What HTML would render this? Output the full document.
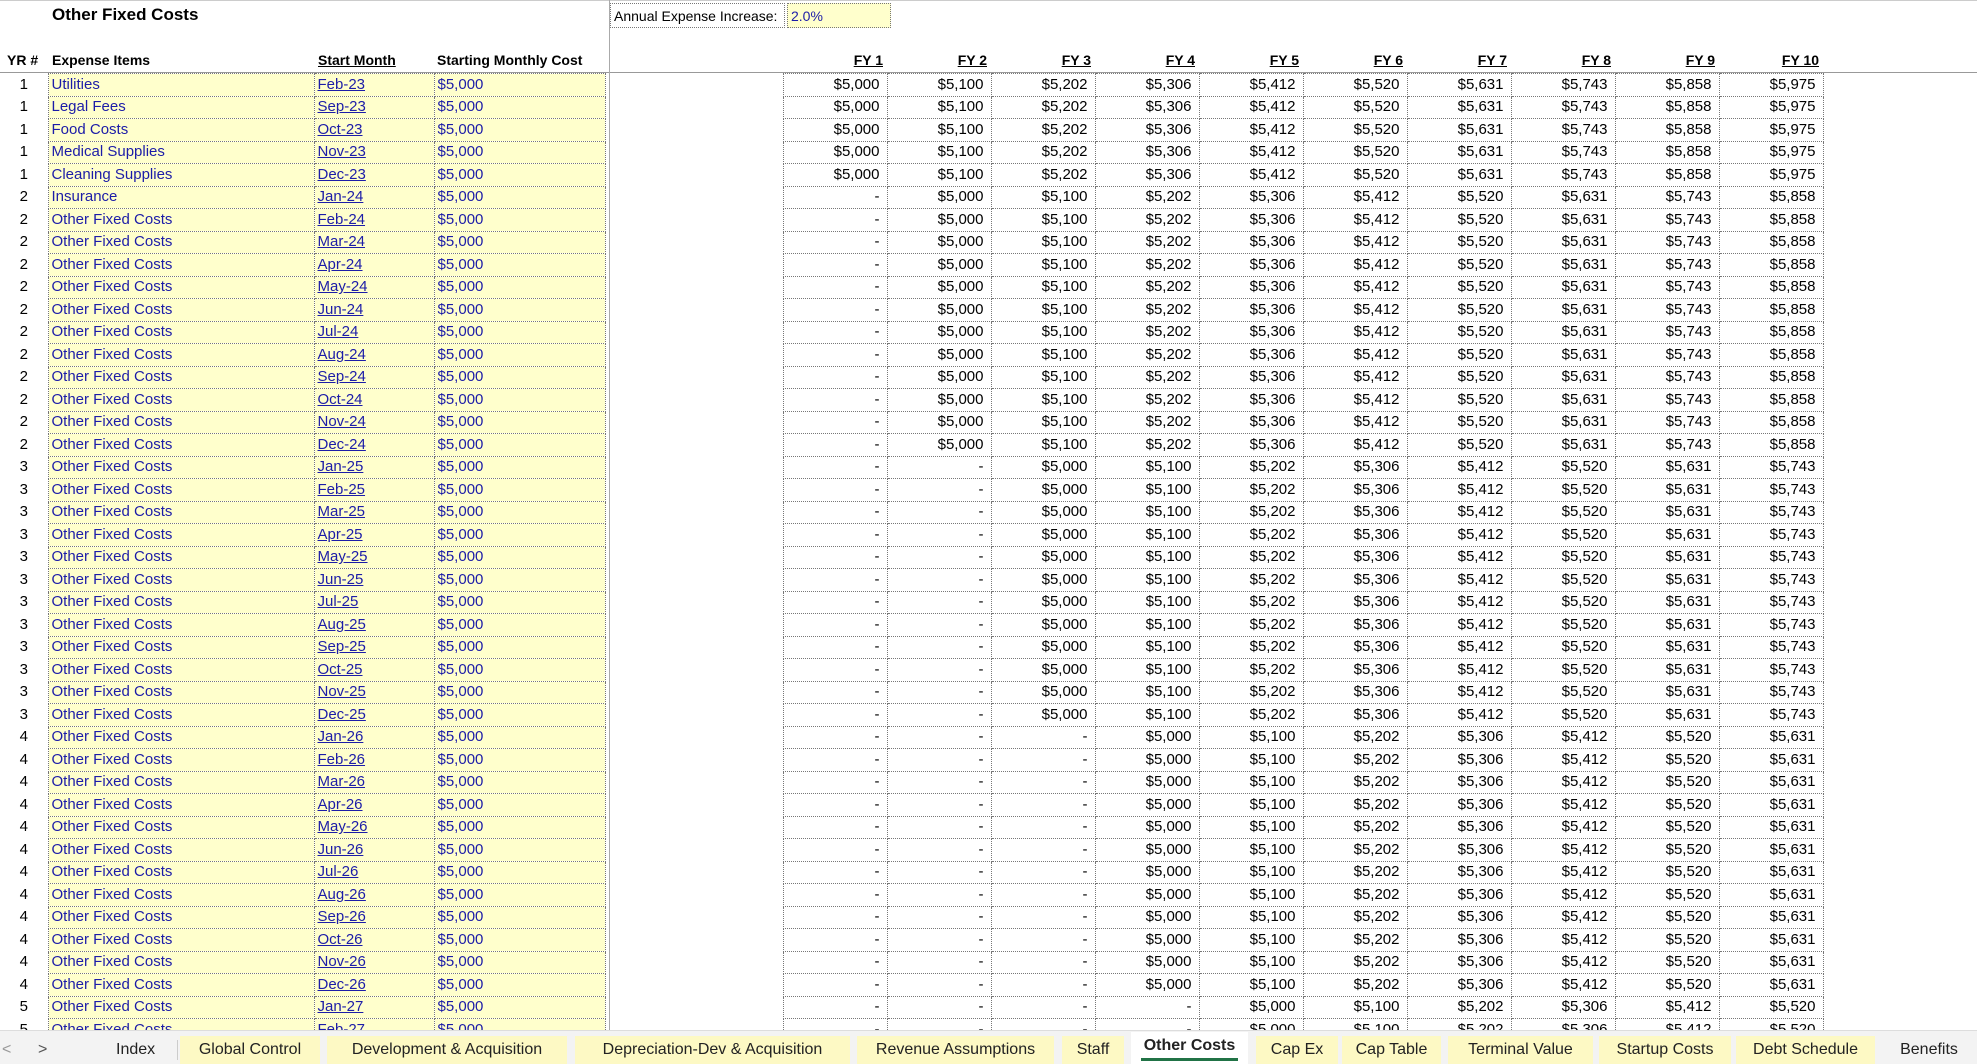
<!DOCTYPE html>
<html><head><meta charset="utf-8"><style>
html,body{margin:0;width:1977px;height:1064px;overflow:hidden}
body{background:#fff;font-family:"Liberation Sans",sans-serif;font-size:15px;color:#000;position:relative}
.abs{position:absolute;white-space:nowrap}
#wrap{position:absolute;left:0;top:73px;width:1977px;height:957px;overflow:hidden}
table{border-collapse:collapse;table-layout:fixed}
td{box-sizing:border-box;height:22.5px;padding:0;white-space:nowrap;overflow:hidden;line-height:20px}
.a{width:48px;text-align:center}
.b,.c,.d{background:#ffffcc;color:#1c1ca8;border:1px dotted #777;padding-left:3px}
.b{width:266px}.c{width:120px}.d{width:171px}
.c{text-decoration:underline}
.e{width:178px}
.n{width:104px;text-align:right;padding-right:7px;border:1px dotted #777}
.tab{position:absolute;top:1036px;height:28px;line-height:28px;text-align:center;background:#fdf9c4;font-size:16px;color:#222}
</style></head><body>
<div style="position:absolute;left:0;top:0;width:1977px;height:1px;background:#ccc"></div>
<div class="abs" style="left:52px;top:5px;font-weight:bold;font-size:17px">Other Fixed Costs</div>
<div class="abs" style="left:610px;top:3px;width:175px;height:25px;border:1px dotted #777;font-size:14px;line-height:25px;padding-left:3px;box-sizing:border-box">Annual Expense Increase:</div>
<div class="abs" style="left:787px;top:3px;width:104px;height:25px;background:#ffffcc;border:1px dotted #777;color:#1c1ca8;font-size:14px;line-height:25px;padding-left:3px;box-sizing:border-box">2.0%</div>
<div style="position:absolute;left:609px;top:0;width:1px;height:1030px;background:#aaa;z-index:2"></div>
<div class="abs" style="left:7px;top:52px;font-weight:bold;font-size:14px">YR #</div>
<div class="abs" style="left:52px;top:52px;font-weight:bold;font-size:14px">Expense Items</div>
<div class="abs" style="left:318px;top:52px;font-weight:bold;font-size:14px;text-decoration:underline">Start Month</div>
<div class="abs" style="left:437px;top:52px;font-weight:bold;font-size:14px">Starting Monthly Cost</div>
<div class="abs" style="left:787px;top:52px;width:1040px;font-weight:bold;font-size:14px;display:flex">
<span style="width:104px;text-align:right;padding-right:8px;box-sizing:border-box;text-decoration:underline">FY 1</span><span style="width:104px;text-align:right;padding-right:8px;box-sizing:border-box;text-decoration:underline">FY 2</span><span style="width:104px;text-align:right;padding-right:8px;box-sizing:border-box;text-decoration:underline">FY 3</span><span style="width:104px;text-align:right;padding-right:8px;box-sizing:border-box;text-decoration:underline">FY 4</span><span style="width:104px;text-align:right;padding-right:8px;box-sizing:border-box;text-decoration:underline">FY 5</span><span style="width:104px;text-align:right;padding-right:8px;box-sizing:border-box;text-decoration:underline">FY 6</span><span style="width:104px;text-align:right;padding-right:8px;box-sizing:border-box;text-decoration:underline">FY 7</span><span style="width:104px;text-align:right;padding-right:8px;box-sizing:border-box;text-decoration:underline">FY 8</span><span style="width:104px;text-align:right;padding-right:8px;box-sizing:border-box;text-decoration:underline">FY 9</span><span style="width:104px;text-align:right;padding-right:8px;box-sizing:border-box;text-decoration:underline">FY 10</span></div>
<div style="position:absolute;left:0;top:72px;width:1977px;height:1px;background:#999"></div>
<div id="wrap"><table>
<tr><td class=a>1</td><td class=b>Utilities</td><td class=c>Feb-23</td><td class=d>$5,000</td><td class=e></td><td class=n>$5,000</td><td class=n>$5,100</td><td class=n>$5,202</td><td class=n>$5,306</td><td class=n>$5,412</td><td class=n>$5,520</td><td class=n>$5,631</td><td class=n>$5,743</td><td class=n>$5,858</td><td class=n>$5,975</td></tr>
<tr><td class=a>1</td><td class=b>Legal Fees</td><td class=c>Sep-23</td><td class=d>$5,000</td><td class=e></td><td class=n>$5,000</td><td class=n>$5,100</td><td class=n>$5,202</td><td class=n>$5,306</td><td class=n>$5,412</td><td class=n>$5,520</td><td class=n>$5,631</td><td class=n>$5,743</td><td class=n>$5,858</td><td class=n>$5,975</td></tr>
<tr><td class=a>1</td><td class=b>Food Costs</td><td class=c>Oct-23</td><td class=d>$5,000</td><td class=e></td><td class=n>$5,000</td><td class=n>$5,100</td><td class=n>$5,202</td><td class=n>$5,306</td><td class=n>$5,412</td><td class=n>$5,520</td><td class=n>$5,631</td><td class=n>$5,743</td><td class=n>$5,858</td><td class=n>$5,975</td></tr>
<tr><td class=a>1</td><td class=b>Medical Supplies</td><td class=c>Nov-23</td><td class=d>$5,000</td><td class=e></td><td class=n>$5,000</td><td class=n>$5,100</td><td class=n>$5,202</td><td class=n>$5,306</td><td class=n>$5,412</td><td class=n>$5,520</td><td class=n>$5,631</td><td class=n>$5,743</td><td class=n>$5,858</td><td class=n>$5,975</td></tr>
<tr><td class=a>1</td><td class=b>Cleaning Supplies</td><td class=c>Dec-23</td><td class=d>$5,000</td><td class=e></td><td class=n>$5,000</td><td class=n>$5,100</td><td class=n>$5,202</td><td class=n>$5,306</td><td class=n>$5,412</td><td class=n>$5,520</td><td class=n>$5,631</td><td class=n>$5,743</td><td class=n>$5,858</td><td class=n>$5,975</td></tr>
<tr><td class=a>2</td><td class=b>Insurance</td><td class=c>Jan-24</td><td class=d>$5,000</td><td class=e></td><td class=n>-</td><td class=n>$5,000</td><td class=n>$5,100</td><td class=n>$5,202</td><td class=n>$5,306</td><td class=n>$5,412</td><td class=n>$5,520</td><td class=n>$5,631</td><td class=n>$5,743</td><td class=n>$5,858</td></tr>
<tr><td class=a>2</td><td class=b>Other Fixed Costs</td><td class=c>Feb-24</td><td class=d>$5,000</td><td class=e></td><td class=n>-</td><td class=n>$5,000</td><td class=n>$5,100</td><td class=n>$5,202</td><td class=n>$5,306</td><td class=n>$5,412</td><td class=n>$5,520</td><td class=n>$5,631</td><td class=n>$5,743</td><td class=n>$5,858</td></tr>
<tr><td class=a>2</td><td class=b>Other Fixed Costs</td><td class=c>Mar-24</td><td class=d>$5,000</td><td class=e></td><td class=n>-</td><td class=n>$5,000</td><td class=n>$5,100</td><td class=n>$5,202</td><td class=n>$5,306</td><td class=n>$5,412</td><td class=n>$5,520</td><td class=n>$5,631</td><td class=n>$5,743</td><td class=n>$5,858</td></tr>
<tr><td class=a>2</td><td class=b>Other Fixed Costs</td><td class=c>Apr-24</td><td class=d>$5,000</td><td class=e></td><td class=n>-</td><td class=n>$5,000</td><td class=n>$5,100</td><td class=n>$5,202</td><td class=n>$5,306</td><td class=n>$5,412</td><td class=n>$5,520</td><td class=n>$5,631</td><td class=n>$5,743</td><td class=n>$5,858</td></tr>
<tr><td class=a>2</td><td class=b>Other Fixed Costs</td><td class=c>May-24</td><td class=d>$5,000</td><td class=e></td><td class=n>-</td><td class=n>$5,000</td><td class=n>$5,100</td><td class=n>$5,202</td><td class=n>$5,306</td><td class=n>$5,412</td><td class=n>$5,520</td><td class=n>$5,631</td><td class=n>$5,743</td><td class=n>$5,858</td></tr>
<tr><td class=a>2</td><td class=b>Other Fixed Costs</td><td class=c>Jun-24</td><td class=d>$5,000</td><td class=e></td><td class=n>-</td><td class=n>$5,000</td><td class=n>$5,100</td><td class=n>$5,202</td><td class=n>$5,306</td><td class=n>$5,412</td><td class=n>$5,520</td><td class=n>$5,631</td><td class=n>$5,743</td><td class=n>$5,858</td></tr>
<tr><td class=a>2</td><td class=b>Other Fixed Costs</td><td class=c>Jul-24</td><td class=d>$5,000</td><td class=e></td><td class=n>-</td><td class=n>$5,000</td><td class=n>$5,100</td><td class=n>$5,202</td><td class=n>$5,306</td><td class=n>$5,412</td><td class=n>$5,520</td><td class=n>$5,631</td><td class=n>$5,743</td><td class=n>$5,858</td></tr>
<tr><td class=a>2</td><td class=b>Other Fixed Costs</td><td class=c>Aug-24</td><td class=d>$5,000</td><td class=e></td><td class=n>-</td><td class=n>$5,000</td><td class=n>$5,100</td><td class=n>$5,202</td><td class=n>$5,306</td><td class=n>$5,412</td><td class=n>$5,520</td><td class=n>$5,631</td><td class=n>$5,743</td><td class=n>$5,858</td></tr>
<tr><td class=a>2</td><td class=b>Other Fixed Costs</td><td class=c>Sep-24</td><td class=d>$5,000</td><td class=e></td><td class=n>-</td><td class=n>$5,000</td><td class=n>$5,100</td><td class=n>$5,202</td><td class=n>$5,306</td><td class=n>$5,412</td><td class=n>$5,520</td><td class=n>$5,631</td><td class=n>$5,743</td><td class=n>$5,858</td></tr>
<tr><td class=a>2</td><td class=b>Other Fixed Costs</td><td class=c>Oct-24</td><td class=d>$5,000</td><td class=e></td><td class=n>-</td><td class=n>$5,000</td><td class=n>$5,100</td><td class=n>$5,202</td><td class=n>$5,306</td><td class=n>$5,412</td><td class=n>$5,520</td><td class=n>$5,631</td><td class=n>$5,743</td><td class=n>$5,858</td></tr>
<tr><td class=a>2</td><td class=b>Other Fixed Costs</td><td class=c>Nov-24</td><td class=d>$5,000</td><td class=e></td><td class=n>-</td><td class=n>$5,000</td><td class=n>$5,100</td><td class=n>$5,202</td><td class=n>$5,306</td><td class=n>$5,412</td><td class=n>$5,520</td><td class=n>$5,631</td><td class=n>$5,743</td><td class=n>$5,858</td></tr>
<tr><td class=a>2</td><td class=b>Other Fixed Costs</td><td class=c>Dec-24</td><td class=d>$5,000</td><td class=e></td><td class=n>-</td><td class=n>$5,000</td><td class=n>$5,100</td><td class=n>$5,202</td><td class=n>$5,306</td><td class=n>$5,412</td><td class=n>$5,520</td><td class=n>$5,631</td><td class=n>$5,743</td><td class=n>$5,858</td></tr>
<tr><td class=a>3</td><td class=b>Other Fixed Costs</td><td class=c>Jan-25</td><td class=d>$5,000</td><td class=e></td><td class=n>-</td><td class=n>-</td><td class=n>$5,000</td><td class=n>$5,100</td><td class=n>$5,202</td><td class=n>$5,306</td><td class=n>$5,412</td><td class=n>$5,520</td><td class=n>$5,631</td><td class=n>$5,743</td></tr>
<tr><td class=a>3</td><td class=b>Other Fixed Costs</td><td class=c>Feb-25</td><td class=d>$5,000</td><td class=e></td><td class=n>-</td><td class=n>-</td><td class=n>$5,000</td><td class=n>$5,100</td><td class=n>$5,202</td><td class=n>$5,306</td><td class=n>$5,412</td><td class=n>$5,520</td><td class=n>$5,631</td><td class=n>$5,743</td></tr>
<tr><td class=a>3</td><td class=b>Other Fixed Costs</td><td class=c>Mar-25</td><td class=d>$5,000</td><td class=e></td><td class=n>-</td><td class=n>-</td><td class=n>$5,000</td><td class=n>$5,100</td><td class=n>$5,202</td><td class=n>$5,306</td><td class=n>$5,412</td><td class=n>$5,520</td><td class=n>$5,631</td><td class=n>$5,743</td></tr>
<tr><td class=a>3</td><td class=b>Other Fixed Costs</td><td class=c>Apr-25</td><td class=d>$5,000</td><td class=e></td><td class=n>-</td><td class=n>-</td><td class=n>$5,000</td><td class=n>$5,100</td><td class=n>$5,202</td><td class=n>$5,306</td><td class=n>$5,412</td><td class=n>$5,520</td><td class=n>$5,631</td><td class=n>$5,743</td></tr>
<tr><td class=a>3</td><td class=b>Other Fixed Costs</td><td class=c>May-25</td><td class=d>$5,000</td><td class=e></td><td class=n>-</td><td class=n>-</td><td class=n>$5,000</td><td class=n>$5,100</td><td class=n>$5,202</td><td class=n>$5,306</td><td class=n>$5,412</td><td class=n>$5,520</td><td class=n>$5,631</td><td class=n>$5,743</td></tr>
<tr><td class=a>3</td><td class=b>Other Fixed Costs</td><td class=c>Jun-25</td><td class=d>$5,000</td><td class=e></td><td class=n>-</td><td class=n>-</td><td class=n>$5,000</td><td class=n>$5,100</td><td class=n>$5,202</td><td class=n>$5,306</td><td class=n>$5,412</td><td class=n>$5,520</td><td class=n>$5,631</td><td class=n>$5,743</td></tr>
<tr><td class=a>3</td><td class=b>Other Fixed Costs</td><td class=c>Jul-25</td><td class=d>$5,000</td><td class=e></td><td class=n>-</td><td class=n>-</td><td class=n>$5,000</td><td class=n>$5,100</td><td class=n>$5,202</td><td class=n>$5,306</td><td class=n>$5,412</td><td class=n>$5,520</td><td class=n>$5,631</td><td class=n>$5,743</td></tr>
<tr><td class=a>3</td><td class=b>Other Fixed Costs</td><td class=c>Aug-25</td><td class=d>$5,000</td><td class=e></td><td class=n>-</td><td class=n>-</td><td class=n>$5,000</td><td class=n>$5,100</td><td class=n>$5,202</td><td class=n>$5,306</td><td class=n>$5,412</td><td class=n>$5,520</td><td class=n>$5,631</td><td class=n>$5,743</td></tr>
<tr><td class=a>3</td><td class=b>Other Fixed Costs</td><td class=c>Sep-25</td><td class=d>$5,000</td><td class=e></td><td class=n>-</td><td class=n>-</td><td class=n>$5,000</td><td class=n>$5,100</td><td class=n>$5,202</td><td class=n>$5,306</td><td class=n>$5,412</td><td class=n>$5,520</td><td class=n>$5,631</td><td class=n>$5,743</td></tr>
<tr><td class=a>3</td><td class=b>Other Fixed Costs</td><td class=c>Oct-25</td><td class=d>$5,000</td><td class=e></td><td class=n>-</td><td class=n>-</td><td class=n>$5,000</td><td class=n>$5,100</td><td class=n>$5,202</td><td class=n>$5,306</td><td class=n>$5,412</td><td class=n>$5,520</td><td class=n>$5,631</td><td class=n>$5,743</td></tr>
<tr><td class=a>3</td><td class=b>Other Fixed Costs</td><td class=c>Nov-25</td><td class=d>$5,000</td><td class=e></td><td class=n>-</td><td class=n>-</td><td class=n>$5,000</td><td class=n>$5,100</td><td class=n>$5,202</td><td class=n>$5,306</td><td class=n>$5,412</td><td class=n>$5,520</td><td class=n>$5,631</td><td class=n>$5,743</td></tr>
<tr><td class=a>3</td><td class=b>Other Fixed Costs</td><td class=c>Dec-25</td><td class=d>$5,000</td><td class=e></td><td class=n>-</td><td class=n>-</td><td class=n>$5,000</td><td class=n>$5,100</td><td class=n>$5,202</td><td class=n>$5,306</td><td class=n>$5,412</td><td class=n>$5,520</td><td class=n>$5,631</td><td class=n>$5,743</td></tr>
<tr><td class=a>4</td><td class=b>Other Fixed Costs</td><td class=c>Jan-26</td><td class=d>$5,000</td><td class=e></td><td class=n>-</td><td class=n>-</td><td class=n>-</td><td class=n>$5,000</td><td class=n>$5,100</td><td class=n>$5,202</td><td class=n>$5,306</td><td class=n>$5,412</td><td class=n>$5,520</td><td class=n>$5,631</td></tr>
<tr><td class=a>4</td><td class=b>Other Fixed Costs</td><td class=c>Feb-26</td><td class=d>$5,000</td><td class=e></td><td class=n>-</td><td class=n>-</td><td class=n>-</td><td class=n>$5,000</td><td class=n>$5,100</td><td class=n>$5,202</td><td class=n>$5,306</td><td class=n>$5,412</td><td class=n>$5,520</td><td class=n>$5,631</td></tr>
<tr><td class=a>4</td><td class=b>Other Fixed Costs</td><td class=c>Mar-26</td><td class=d>$5,000</td><td class=e></td><td class=n>-</td><td class=n>-</td><td class=n>-</td><td class=n>$5,000</td><td class=n>$5,100</td><td class=n>$5,202</td><td class=n>$5,306</td><td class=n>$5,412</td><td class=n>$5,520</td><td class=n>$5,631</td></tr>
<tr><td class=a>4</td><td class=b>Other Fixed Costs</td><td class=c>Apr-26</td><td class=d>$5,000</td><td class=e></td><td class=n>-</td><td class=n>-</td><td class=n>-</td><td class=n>$5,000</td><td class=n>$5,100</td><td class=n>$5,202</td><td class=n>$5,306</td><td class=n>$5,412</td><td class=n>$5,520</td><td class=n>$5,631</td></tr>
<tr><td class=a>4</td><td class=b>Other Fixed Costs</td><td class=c>May-26</td><td class=d>$5,000</td><td class=e></td><td class=n>-</td><td class=n>-</td><td class=n>-</td><td class=n>$5,000</td><td class=n>$5,100</td><td class=n>$5,202</td><td class=n>$5,306</td><td class=n>$5,412</td><td class=n>$5,520</td><td class=n>$5,631</td></tr>
<tr><td class=a>4</td><td class=b>Other Fixed Costs</td><td class=c>Jun-26</td><td class=d>$5,000</td><td class=e></td><td class=n>-</td><td class=n>-</td><td class=n>-</td><td class=n>$5,000</td><td class=n>$5,100</td><td class=n>$5,202</td><td class=n>$5,306</td><td class=n>$5,412</td><td class=n>$5,520</td><td class=n>$5,631</td></tr>
<tr><td class=a>4</td><td class=b>Other Fixed Costs</td><td class=c>Jul-26</td><td class=d>$5,000</td><td class=e></td><td class=n>-</td><td class=n>-</td><td class=n>-</td><td class=n>$5,000</td><td class=n>$5,100</td><td class=n>$5,202</td><td class=n>$5,306</td><td class=n>$5,412</td><td class=n>$5,520</td><td class=n>$5,631</td></tr>
<tr><td class=a>4</td><td class=b>Other Fixed Costs</td><td class=c>Aug-26</td><td class=d>$5,000</td><td class=e></td><td class=n>-</td><td class=n>-</td><td class=n>-</td><td class=n>$5,000</td><td class=n>$5,100</td><td class=n>$5,202</td><td class=n>$5,306</td><td class=n>$5,412</td><td class=n>$5,520</td><td class=n>$5,631</td></tr>
<tr><td class=a>4</td><td class=b>Other Fixed Costs</td><td class=c>Sep-26</td><td class=d>$5,000</td><td class=e></td><td class=n>-</td><td class=n>-</td><td class=n>-</td><td class=n>$5,000</td><td class=n>$5,100</td><td class=n>$5,202</td><td class=n>$5,306</td><td class=n>$5,412</td><td class=n>$5,520</td><td class=n>$5,631</td></tr>
<tr><td class=a>4</td><td class=b>Other Fixed Costs</td><td class=c>Oct-26</td><td class=d>$5,000</td><td class=e></td><td class=n>-</td><td class=n>-</td><td class=n>-</td><td class=n>$5,000</td><td class=n>$5,100</td><td class=n>$5,202</td><td class=n>$5,306</td><td class=n>$5,412</td><td class=n>$5,520</td><td class=n>$5,631</td></tr>
<tr><td class=a>4</td><td class=b>Other Fixed Costs</td><td class=c>Nov-26</td><td class=d>$5,000</td><td class=e></td><td class=n>-</td><td class=n>-</td><td class=n>-</td><td class=n>$5,000</td><td class=n>$5,100</td><td class=n>$5,202</td><td class=n>$5,306</td><td class=n>$5,412</td><td class=n>$5,520</td><td class=n>$5,631</td></tr>
<tr><td class=a>4</td><td class=b>Other Fixed Costs</td><td class=c>Dec-26</td><td class=d>$5,000</td><td class=e></td><td class=n>-</td><td class=n>-</td><td class=n>-</td><td class=n>$5,000</td><td class=n>$5,100</td><td class=n>$5,202</td><td class=n>$5,306</td><td class=n>$5,412</td><td class=n>$5,520</td><td class=n>$5,631</td></tr>
<tr><td class=a>5</td><td class=b>Other Fixed Costs</td><td class=c>Jan-27</td><td class=d>$5,000</td><td class=e></td><td class=n>-</td><td class=n>-</td><td class=n>-</td><td class=n>-</td><td class=n>$5,000</td><td class=n>$5,100</td><td class=n>$5,202</td><td class=n>$5,306</td><td class=n>$5,412</td><td class=n>$5,520</td></tr>
<tr><td class=a>5</td><td class=b>Other Fixed Costs</td><td class=c>Feb-27</td><td class=d>$5,000</td><td class=e></td><td class=n>-</td><td class=n>-</td><td class=n>-</td><td class=n>-</td><td class=n>$5,000</td><td class=n>$5,100</td><td class=n>$5,202</td><td class=n>$5,306</td><td class=n>$5,412</td><td class=n>$5,520</td></tr>
<tr><td class=a>5</td><td class=b>Other Fixed Costs</td><td class=c>Mar-27</td><td class=d>$5,000</td><td class=e></td><td class=n>-</td><td class=n>-</td><td class=n>-</td><td class=n>-</td><td class=n>$5,000</td><td class=n>$5,100</td><td class=n>$5,202</td><td class=n>$5,306</td><td class=n>$5,412</td><td class=n>$5,520</td></tr>
</table></div>
<div style="position:absolute;left:0;top:1030px;width:1977px;height:34px;background:#f3f3f3;border-top:1px solid #ddd;z-index:3"></div>
<div style="position:absolute;left:0;top:0;width:1977px;height:1064px;z-index:4">
<div class="abs" style="left:2px;top:1036px;line-height:28px;font-size:16px;color:#999">&lt;</div>
<div class="abs" style="left:38px;top:1036px;line-height:28px;font-size:16px;color:#555">&gt;</div>
<div class="abs" style="left:116px;top:1036px;line-height:28px;font-size:16px;color:#222">Index</div>
<div style="position:absolute;left:177px;top:1040px;width:1px;height:20px;background:#ccc"></div>
<div class="tab" style="left:180px;width:140px">Global Control</div>
<div class="tab" style="left:327px;width:240px">Development &amp; Acquisition</div>
<div class="tab" style="left:575px;width:275px">Depreciation-Dev &amp; Acquisition</div>
<div class="tab" style="left:857px;width:197px">Revenue Assumptions</div>
<div class="tab" style="left:1062px;width:62px">Staff</div>
<div class="tab" style="left:1131px;width:117px;background:#fff;font-weight:bold;top:1032px;height:32px;line-height:28px">Other Costs<div style="position:absolute;left:10px;right:10px;bottom:3px;height:3px;background:#217346"></div></div>
<div class="tab" style="left:1256px;width:82px">Cap Ex</div>
<div class="tab" style="left:1342px;width:99px">Cap Table</div>
<div class="tab" style="left:1448px;width:145px">Terminal Value</div>
<div class="tab" style="left:1599px;width:132px">Startup Costs</div>
<div class="tab" style="left:1736px;width:139px">Debt Schedule</div>
<div class="tab" style="left:1881px;width:96px;background:transparent">Benefits</div>
</div>
</body></html>
